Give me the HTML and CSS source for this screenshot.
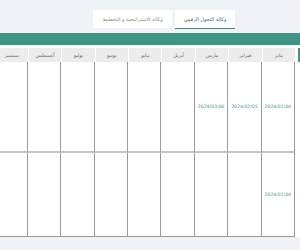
FILE: index.html
```html
<!DOCTYPE html>
<html lang="ar" dir="rtl">
<head>
    <meta charset="UTF-8">
    <meta name="viewport" content="width=device-width, initial-scale=1.0">
    <title>الخطة الزمنية</title>
    <link rel="stylesheet" href="styles.css">
</head>
<body>

<div class="tabs">
    <div class="tab active">وكالة التحول الرقمي</div>
    <div class="tab">وكالة الاستراتيجية و التخطيط</div>
</div>

<div class="bar"></div>

<div class="board">
    <div class="row head">
        <div class="stub"></div>
        <div class="cells">
            <div class="cell">يناير</div>
            <div class="cell">فبراير</div>
            <div class="cell">مارس</div>
            <div class="cell">أبريل</div>
            <div class="cell">مايو</div>
            <div class="cell">يونيو</div>
            <div class="cell">يوليو</div>
            <div class="cell">أغسطس</div>
            <div class="cell">سبتمبر</div>
        </div>
    </div>

    <div class="row body first">
        <div class="stub"></div>
        <div class="cells">
            <div class="cell"><span class="date">2024/01/04</span></div>
            <div class="cell"><span class="date">2024/02/05</span></div>
            <div class="cell"><span class="date">2024/03/06</span></div>
            <div class="cell"></div>
            <div class="cell"></div>
            <div class="cell"></div>
            <div class="cell"></div>
            <div class="cell"></div>
            <div class="cell"></div>
        </div>
    </div>

    <div class="row body second">
        <div class="stub"></div>
        <div class="cells">
            <div class="cell"><span class="date">2024/01/04</span></div>
            <div class="cell"></div>
            <div class="cell"></div>
            <div class="cell"></div>
            <div class="cell"></div>
            <div class="cell"></div>
            <div class="cell"></div>
            <div class="cell"></div>
            <div class="cell"></div>
        </div>
    </div>
</div>

</body>
</html>
```

FILE: styles.css
```css
body {
    margin: 0;
    padding: 0;
    background: #eff3f8;
    font-family: "DejaVu Sans", "Noto Sans", sans-serif;
    direction: rtl;
    overflow: hidden;
}

.tabs {
    display: flex;
    justify-content: center;
    gap: 3px;
    padding-top: 10px;
    padding-left: 28px;
    height: 23px;
}

.tab {
    background: #fff;
    color: #8a8a8a;
    font-size: 5px;
    width: 79px;
    height: 18px;
    line-height: 18px;
    text-align: center;
    white-space: nowrap;
    box-sizing: border-box;
}

.tab.active {
    color: #2d6f5f;
    width: 60px;
    height: 19px;
    border-bottom: 1.5px solid #3b8f7b;
}

.bar {
    height: 12px;
    background: #3f9583;
}

.board {
    background: #fff;
    padding-top: 3px;
    overflow: hidden;
}

.row {
    display: flex;
}

.stub {
    flex: 0 0 2px;
    margin-left: 3px;
}

.head .stub {
    background: #3f9583;
}

.cells {
    display: grid;
    grid-template-columns: repeat(9, 33.4px);
    flex: 0 0 auto;
}

.head .cell {
    background: #ececec;
    height: 14px;
    line-height: 14px;
    margin-left: 1px;
    text-align: center;
    font-size: 5px;
    color: #6e6e6e;
    white-space: nowrap;
}

.body .cells {
    border-right: 1px solid #9a9a9a;
}

.body .cell {
    border-left: 1px solid #9a9a9a;
    display: flex;
    align-items: center;
    justify-content: center;
}

.body.first .cell {
    height: 89px;
    border-bottom: 2px solid #c4c4c4;
}

.body.second .cell {
    height: 83px;
    border-bottom: 1px solid #9a9a9a;
}

.date {
    font-size: 4.6px;
    color: #4a9c88;
    direction: ltr;
}
```
